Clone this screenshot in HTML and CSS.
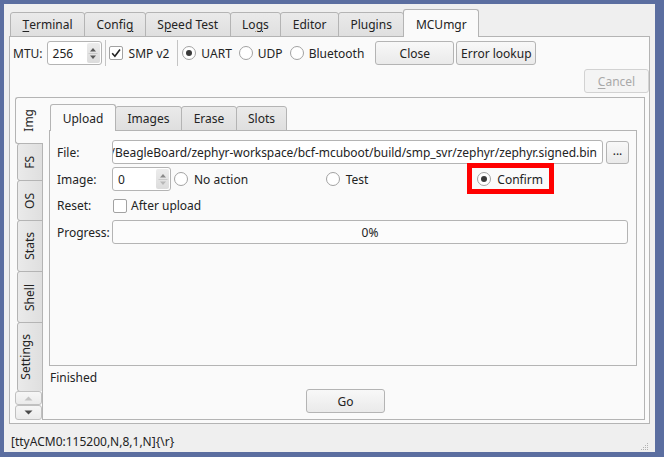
FILE: index.html
```html
<!DOCTYPE html>
<html>
<head>
<meta charset="utf-8">
<link rel="stylesheet" href="styles.css">
</head>
<body>
<div class="window">
  <div class="tabbar">
    <div class="tab"><u>T</u>erminal</div>
    <div class="tab">Confi<u>g</u></div>
    <div class="tab">S<u>p</u>eed Test</div>
    <div class="tab">Lo<u>g</u>s</div>
    <div class="tab">Editor</div>
    <div class="tab">Plugins</div>
    <div class="tab active">MCUmgr</div>
  </div>
  <div class="pane main">
    <div class="toolbar">
      <span class="mtu-label">MTU:</span>
      <div class="spin mtu-spin">
        <span class="spin-val">256</span>
        <span class="spin-btns"><svg width="12" height="20" viewBox="0 0 12 20"><path d="M3 8.5h6L6 5z" fill="#595959"/><path d="M1.5 10.5h9" stroke="#cacaca" stroke-width="1"/><path d="M3 12.5h6L6 16z" fill="#595959"/></svg></span>
      </div>
      <span class="vsep"></span>
      <span class="check smp"><span class="cbox"><svg width="12" height="12" viewBox="0 0 12 12"><path d="M2.2 6.2L4.9 9.2L10 2.4" fill="none" stroke="#222" stroke-width="1.6"/></svg></span><span class="ctext">SMP v2</span></span>
      <span class="vsep sep2"></span>
      <span class="radio tb first"><span class="rcircle on"></span><span class="rtext">UART</span></span>
      <span class="radio tb"><span class="rcircle"></span><span class="rtext">UDP</span></span>
      <span class="radio tb"><span class="rcircle"></span><span class="rtext">Bluetooth</span></span>
      <span class="btn close-btn">Close</span>
      <span class="btn err-btn">Error lookup</span>
    </div>
    <div class="cancel-row">
      <span class="btn cancel-btn disabled"><u>C</u>ancel</span>
    </div>
    <div class="vtabwidget">
      <div class="vtabs">
        <div class="vtab-list">
          <div class="vtab active t-img"><span>Img</span></div>
          <div class="vtab t-fs"><span>FS</span></div>
          <div class="vtab t-os"><span>OS</span></div>
          <div class="vtab t-stats"><span>Stats</span></div>
          <div class="vtab t-shell"><span>Shell</span></div>
          <div class="vtab t-settings"><span>Settings</span></div>
        </div>
        <div class="scroll-btn up"><svg width="9" height="5" viewBox="0 0 9 5"><path d="M0.5 4.5h8L4.5 0.5z" fill="#c4c4c4"/></svg></div>
        <div class="scroll-btn down"><svg width="9" height="5" viewBox="0 0 9 5"><path d="M0.5 0.5h8L4.5 4.5z" fill="#4a4a4a"/></svg></div>
      </div>
      <div class="vpane">
        <div class="htabs">
          <div class="htab active h-upload">Upload</div>
          <div class="htab h-images">Images</div>
          <div class="htab h-erase">Erase</div>
          <div class="htab h-slots">Slots</div>
        </div>
        <div class="upload">
          <div class="form">
            <div class="flabel">File:</div>
            <div class="field file-field">
              <div class="lineedit"><span>/BeagleBoard/zephyr-workspace/bcf-mcuboot/build/smp_svr/zephyr/zephyr.signed.bin</span></div>
              <span class="btn dots-btn">...</span>
            </div>

            <div class="flabel">Image:</div>
            <div class="field image-field">
              <div class="spin img-spin">
                <span class="spin-val">0</span>
                <span class="spin-btns"><svg width="12" height="20" viewBox="0 0 12 20"><path d="M3 8.5h6L6 5z" fill="#8a8a8a"/><path d="M1.5 10.5h9" stroke="#cacaca" stroke-width="1"/><path d="M3 12.5h6L6 16z" fill="#b8b8b8"/></svg></span>
              </div>
              <div class="radio-grid">
                <span class="radio"><span class="rcircle"></span><span class="rtext">No action</span></span>
                <span class="radio"><span class="rcircle"></span><span class="rtext">Test</span></span>
                <span class="radio confirm"><span class="rcircle on"></span><span class="rtext">Confirm</span><span class="highlight"></span></span>
              </div>
            </div>

            <div class="flabel">Reset:</div>
            <div class="field">
              <span class="check reset"><span class="cbox"></span><span class="ctext">After upload</span></span>
            </div>

            <div class="flabel">Progress:</div>
            <div class="field">
              <div class="progress">0%</div>
            </div>
          </div>
        </div>
        <div class="finished">Finished</div>
        <div class="go-row"><span class="btn go-btn">Go</span></div>
      </div>
    </div>
  </div>
  <div class="statusbar">
    <span class="status-text">[ttyACM0:115200,N,8,1,N]{\r}</span>
    <span class="grip"><svg width="8" height="8" viewBox="0 0 8 8"><g fill="#b2b2b2"><rect x="6" y="0" width="1" height="1"/><rect x="4" y="2" width="1" height="1"/><rect x="6" y="2" width="1" height="1"/><rect x="2" y="4" width="1" height="1"/><rect x="4" y="4" width="1" height="1"/><rect x="6" y="4" width="1" height="1"/><rect x="0" y="6" width="1" height="1"/><rect x="2" y="6" width="1" height="1"/><rect x="4" y="6" width="1" height="1"/><rect x="6" y="6" width="1" height="1"/></g></svg></span>
  </div>
</div>
</body>
</html>
```

FILE: styles.css
```css
* { box-sizing: border-box; }
html, body { margin: 0; padding: 0; }
body {
  background: #5b6ea0;
  width: 664px;
  height: 457px;
  overflow: hidden;
  font-family: "Noto Sans", "Open Sans", sans-serif;
  font-size: 12px;
  color: #232323;
}
u { text-decoration: underline; text-underline-offset: 2px; }

.window {
  margin: 4px 0 0 4px;
  width: 651px;
  height: 448px;
  background: #efefef;
  display: flex;
  flex-direction: column;
  padding: 5px 5px 0 5px;
}

/* top tabs */
.tabbar {
  display: flex;
  align-items: flex-end;
  height: 28px;
  padding-left: 1px;
  margin-bottom: -1px;
  position: relative;
  z-index: 2;
  flex: none;
}
.tab {
  height: 25px;
  padding: 0 11.5px;
  border: 1px solid #b4b4b4;
  margin-right: -1px;
  background: linear-gradient(#eaeaea, #dfdfdf);
  border-radius: 3px 3px 0 0;
  display: flex;
  align-items: center;
  white-space: nowrap;
}
.tab.active {
  height: 28px;
  background: #fafafa;
  border-bottom: none;
  padding-top: 1px;
}

.pane.main {
  flex: none;
  height: 388px;
  border: 1px solid #b4b4b4;
  background: #fafafa;
  display: flex;
  flex-direction: column;
  padding: 4px 0 3px 0;
  position: relative;
  z-index: 1;
}

/* toolbar */
.toolbar {
  height: 24px;
  display: flex;
  align-items: center;
  padding-left: 3px;
  flex: none;
}
.mtu-label { white-space: nowrap; }
.spin {
  height: 24px;
  display: flex;
  align-items: center;
  border: 1px solid #b4b4b4;
  border-radius: 3px;
  background: #fff;
  padding-left: 5px;
}
.mtu-spin { width: 55px; margin-left: 4px; }
.img-spin { width: 59px; }
.spin-btns {
  margin-left: auto;
  margin-right: 1px;
  width: 13px;
  height: 20px;
  background: linear-gradient(#ececec, #dcdcdc);
  border-radius: 2px;
  display: flex;
  align-items: center;
  justify-content: center;
}
.spin-btns svg { display: block; }

.vsep {
  width: 1px;
  height: 26px;
  background: #c4c4c4;
  margin-left: 3px;
}
.sep2 { margin-left: 8px; }

.check { display: flex; align-items: center; white-space: nowrap; }
.smp { margin-left: 3px; }
.cbox {
  width: 14px;
  height: 14px;
  border: 1px solid #a2a2a2;
  border-radius: 2px;
  background: #fff;
  display: flex;
  align-items: center;
  justify-content: center;
}
.cbox svg { display: block; }
.ctext { margin-left: 6px; }
.reset .ctext { margin-left: 4px; }

.radio { display: flex; align-items: center; white-space: nowrap; }
.radio.tb { margin-left: 7px; }
.radio.tb.first { margin-left: 4px; }
.rcircle {
  width: 14px;
  height: 14px;
  border: 1px solid #a2a2a2;
  border-radius: 50%;
  background: #fff;
  display: flex;
  align-items: center;
  justify-content: center;
  flex: none;
}
.rcircle.on::after {
  content: "";
  width: 6px;
  height: 6px;
  border-radius: 50%;
  background: #3a3a3a;
}
.rtext { margin-left: 5px; }

.btn {
  display: flex;
  align-items: center;
  justify-content: center;
  height: 24px;
  border: 1px solid #b4b4b4;
  border-radius: 3px;
  background: linear-gradient(#f8f8f8, #eaeaea);
  white-space: nowrap;
}
.close-btn { width: 79px; margin-left: 11px; }
.err-btn { width: 80px; margin-left: 2px; }

.cancel-row {
  margin-top: 4px;
  height: 24px;
  display: flex;
  justify-content: flex-end;
  flex: none;
}
.cancel-btn { width: 65px; }
.btn.disabled {
  color: #a9a9a9;
  border-color: #d2d2d2;
  background: #f4f4f4;
}

/* vertical tab widget */
.vtabwidget {
  flex: 1;
  display: flex;
  margin: 4px 4px 0 5px;
  min-height: 0;
}
.vtabs {
  width: 28px;
  margin-right: -1px;
  display: flex;
  flex-direction: column;
  position: relative;
  z-index: 2;
}
.vtab-list {
  flex: 1;
  overflow: hidden;
  display: flex;
  flex-direction: column;
}
.vtab {
  flex: none;
  margin-left: 2px;
  width: 26px;
  border: 1px solid #b4b4b4;
  border-radius: 3px 0 0 3px;
  margin-top: -1px;
  background: linear-gradient(90deg, #eaeaea, #dfdfdf);
  display: flex;
  align-items: center;
  justify-content: center;
}
.vtab:first-child { margin-top: 0; }
.vtab.active {
  margin-left: 0;
  width: 28px;
  background: #fafafa;
  border-right: none;
  padding-right: 1px;
}
.t-img { height: 47px; }
.t-fs { height: 38px; }
.t-os { height: 41px; }
.t-stats { height: 52px; }
.t-shell { height: 52px; }
.t-settings { height: 70px; justify-content: flex-start; }
.t-settings span { margin-top: 0; }
.vtab span {
  writing-mode: vertical-rl;
  transform: rotate(180deg);
  line-height: 16px;
  white-space: nowrap;
}
.t-settings { align-items: center; }
.scroll-btn {
  flex: none;
  width: 27px;
  border: 1px solid #c0c0c0;
  border-radius: 3px;
  background: linear-gradient(#f6f6f6, #ebebeb);
  display: flex;
  align-items: center;
  justify-content: center;
}
.scroll-btn svg { display: block; }
.scroll-btn.up { height: 14px; }
.scroll-btn.down { height: 15px; }

.vpane {
  flex: 1;
  border: 1px solid #b4b4b4;
  background: #fafafa;
  display: flex;
  flex-direction: column;
  padding: 6px 7px 6px 6px;
  min-width: 0;
  position: relative;
  z-index: 1;
}
.htabs {
  display: flex;
  align-items: flex-end;
  height: 27px;
  padding-left: 1px;
  margin-bottom: -1px;
  position: relative;
  z-index: 2;
  flex: none;
}
.htab {
  height: 25px;
  border: 1px solid #b4b4b4;
  margin-right: -1px;
  background: linear-gradient(#eaeaea, #dfdfdf);
  border-radius: 3px 3px 0 0;
  display: flex;
  align-items: center;
  justify-content: center;
  white-space: nowrap;
}
.htab.active {
  height: 27px;
  background: #fafafa;
  border-bottom: none;
  padding-top: 1px;
}
.h-upload { width: 66px; }
.h-images { width: 67px; }
.h-erase { width: 56px; }
.h-slots { width: 51px; }

.upload {
  flex: 1;
  border: 1px solid #b4b4b4;
  background: #fafafa;
  padding: 9px 7px 0 7px;
  position: relative;
  z-index: 1;
}
.form {
  display: grid;
  grid-template-columns: 52px 1fr;
  grid-template-rows: 24px 24px 23px 24px;
  column-gap: 3px;
  row-gap: 3px;
}
.flabel { display: flex; align-items: center; white-space: nowrap; }
.field { display: flex; align-items: center; min-width: 0; }
.file-field { gap: 3px; }
.lineedit {
  flex: 1;
  height: 24px;
  border: 1px solid #b4b4b4;
  border-radius: 3px;
  background: #fff;
  display: flex;
  align-items: center;
  justify-content: flex-end;
  overflow: hidden;
  padding: 0 5px 0 0;
  white-space: nowrap;
  min-width: 0;
  letter-spacing: -0.04px;
}
.lineedit span { flex: none; }
.dots-btn { width: 23px; height: 23px; padding-bottom: 3px; }

.image-field { gap: 3px; }
.radio-grid {
  flex: 1;
  display: grid;
  grid-template-columns: 1fr 1fr 1fr;
  align-items: center;
}
.image-field .rtext { margin-left: 6px; }
.confirm { position: relative; justify-self: start; }
.highlight {
  position: absolute;
  left: -10px;
  top: -8px;
  width: 87px;
  height: 31px;
  border: 5px solid #ff0000;
  pointer-events: none;
}

.reset { margin-left: 1px; }

.progress {
  flex: 1;
  height: 24px;
  border: 1px solid #b4b4b4;
  border-radius: 3px;
  background: #fcfcfc;
  display: flex;
  align-items: center;
  justify-content: center;
  margin-right: 1px;
}

.finished {
  height: 23px;
  display: flex;
  align-items: center;
  padding-left: 1px;
  flex: none;
}
.go-row {
  height: 24px;
  display: flex;
  justify-content: center;
  padding-left: 5px;
  flex: none;
}
.go-btn { width: 79px; }

.statusbar {
  flex: 1;
  display: flex;
  align-items: center;
  padding: 7px 1px 0 2px;
}
.status-text { white-space: nowrap; }
.grip { margin-left: auto; align-self: flex-end; margin-bottom: 1px; }
.grip svg { display: block; }
```
